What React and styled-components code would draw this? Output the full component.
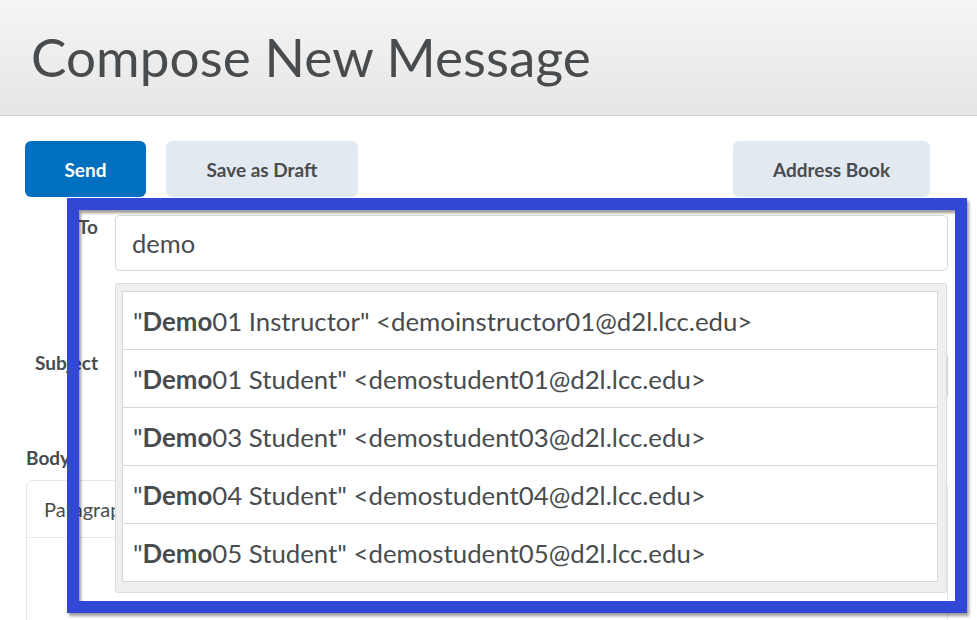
import React from 'react'
import styled, { createGlobalStyle } from 'styled-components'

const GlobalStyle = createGlobalStyle`
  html, body {
    margin: 0;
    padding: 0;
    background: #fff;
    font-family: Lato, "Open Sans", "Liberation Sans", sans-serif;
    color: #494c4e;
    overflow: hidden;
  }
`

const Page = styled.div`
  position: relative;
  width: 977px;
  height: 620px;
  overflow: hidden;
`

const Header = styled.header`
  height: 115px;
  background: linear-gradient(#f5f5f5, #e6e6e6);
  border-bottom: 1px solid #d4d4d4;
  display: flex;
  align-items: center;
  padding-left: 31px;
`

const Title = styled.h1`
  margin: 0 0 2px;
  font-size: 53px;
  font-weight: 400;
  letter-spacing: 0.1px;
  color: #494c4e;
`

const Toolbar = styled.div`
  display: flex;
  align-items: center;
  gap: 20px;
  padding: 25px 47px 0 25px;
`

const Button = styled.button`
  height: 56px;
  width: ${p => p.$w}px;
  border: none;
  border-radius: 6px;
  font-family: Lato, "Liberation Sans", sans-serif;
  font-size: 19px;
  font-weight: 700;
  background: ${p => (p.$primary ? '#006fbf' : '#e3e9f1')};
  color: ${p => (p.$primary ? '#fff' : '#494c4e')};
  margin-left: ${p => (p.$push ? 'auto' : '0')};
`

const Form = styled.div`
  display: grid;
  grid-template-columns: 73px 1fr;
  column-gap: 17px;
  padding: 18px 29px 0 25px;
`

const Label = styled.label`
  font-size: 19px;
  line-height: 23px;
  font-weight: 700;
  text-align: right;
  padding-top: ${p => p.$top || 0}px;
`

const Field = styled.div`
  position: relative;
`

const Input = styled.div`
  height: 56px;
  box-sizing: border-box;
  border: 1px solid #d3d9e3;
  border-radius: 5px;
  display: flex;
  align-items: center;
  padding-left: 16px;
  font-size: 25.5px;
  background: #fff;
`

const SubjectInput = styled.div`
  height: 46px;
  margin-top: 81px;
  border: 1px solid #cfd5de;
  border-radius: 5px;
`

const Menu = styled.div`
  position: absolute;
  left: 0;
  right: 1px;
  top: 68px;
  background: #efefef;
  border: 1px solid #dcdcdc;
  border-radius: 3px;
  padding: 7px 8px 10px 6px;
  z-index: 2;
`

const List = styled.ul`
  list-style: none;
  margin: 0;
  padding: 0;
  border: 1px solid #d8d8d8;
  background: #fff;
`

const Item = styled.li`
  height: 57px;
  display: flex;
  align-items: center;
  padding-left: 10px;
  font-size: 25.8px;
  border-top: ${p => (p.$first ? 'none' : '1px solid #d8d8d8')};
  white-space: nowrap;
`

const BodyBlock = styled.div`
  padding: 46px 29px 0 26px;
`

const BodyLabel = styled.div`
  font-size: 19px;
  line-height: 23px;
  font-weight: 700;
  margin-bottom: 11px;
`

const Editor = styled.div`
  border: 1px solid #e3e9f1;
  border-radius: 7px;
  height: 200px;
`

const EditorBar = styled.div`
  height: 56px;
  border-bottom: 1px solid #e3e9f1;
  display: flex;
  align-items: center;
  padding-left: 17px;
  font-size: 20px;
`

const Highlight = styled.div`
  position: absolute;
  left: 67px;
  top: 198px;
  width: 900px;
  height: 415px;
  box-sizing: border-box;
  border: 12px solid #3347d6;
  box-shadow: 2px 3px 3px rgba(0, 0, 0, 0.4), inset 2px 3px 3px rgba(0, 0, 0, 0.4);
  pointer-events: none;
  z-index: 5;
`

const contacts = [
  ['01 Instructor', 'demoinstructor01'],
  ['01 Student', 'demostudent01'],
  ['03 Student', 'demostudent03'],
  ['04 Student', 'demostudent04'],
  ['05 Student', 'demostudent05'],
]

export default function App() {
  return (
    <Page>
      <GlobalStyle />
      <Header>
        <Title>Compose New Message</Title>
      </Header>
      <Toolbar>
        <Button $primary $w={121}>Send</Button>
        <Button $w={192}>Save as Draft</Button>
        <Button $push $w={197}>Address Book</Button>
      </Toolbar>
      <Form>
        <Label>To</Label>
        <Field>
          <Input>demo</Input>
          <Menu>
            <List>
              {contacts.map(([rest, email], i) => (
                <Item key={email} $first={i === 0}>
                  "<b>Demo</b>{rest}" &lt;{email}@d2l.lcc.edu&gt;
                </Item>
              ))}
            </List>
          </Menu>
        </Field>
        <Label $top={80}>Subject</Label>
        <Field>
          <SubjectInput />
        </Field>
      </Form>
      <BodyBlock>
        <BodyLabel>Body</BodyLabel>
        <Editor>
          <EditorBar>Paragraph</EditorBar>
        </Editor>
      </BodyBlock>
      <Highlight />
    </Page>
  )
}
